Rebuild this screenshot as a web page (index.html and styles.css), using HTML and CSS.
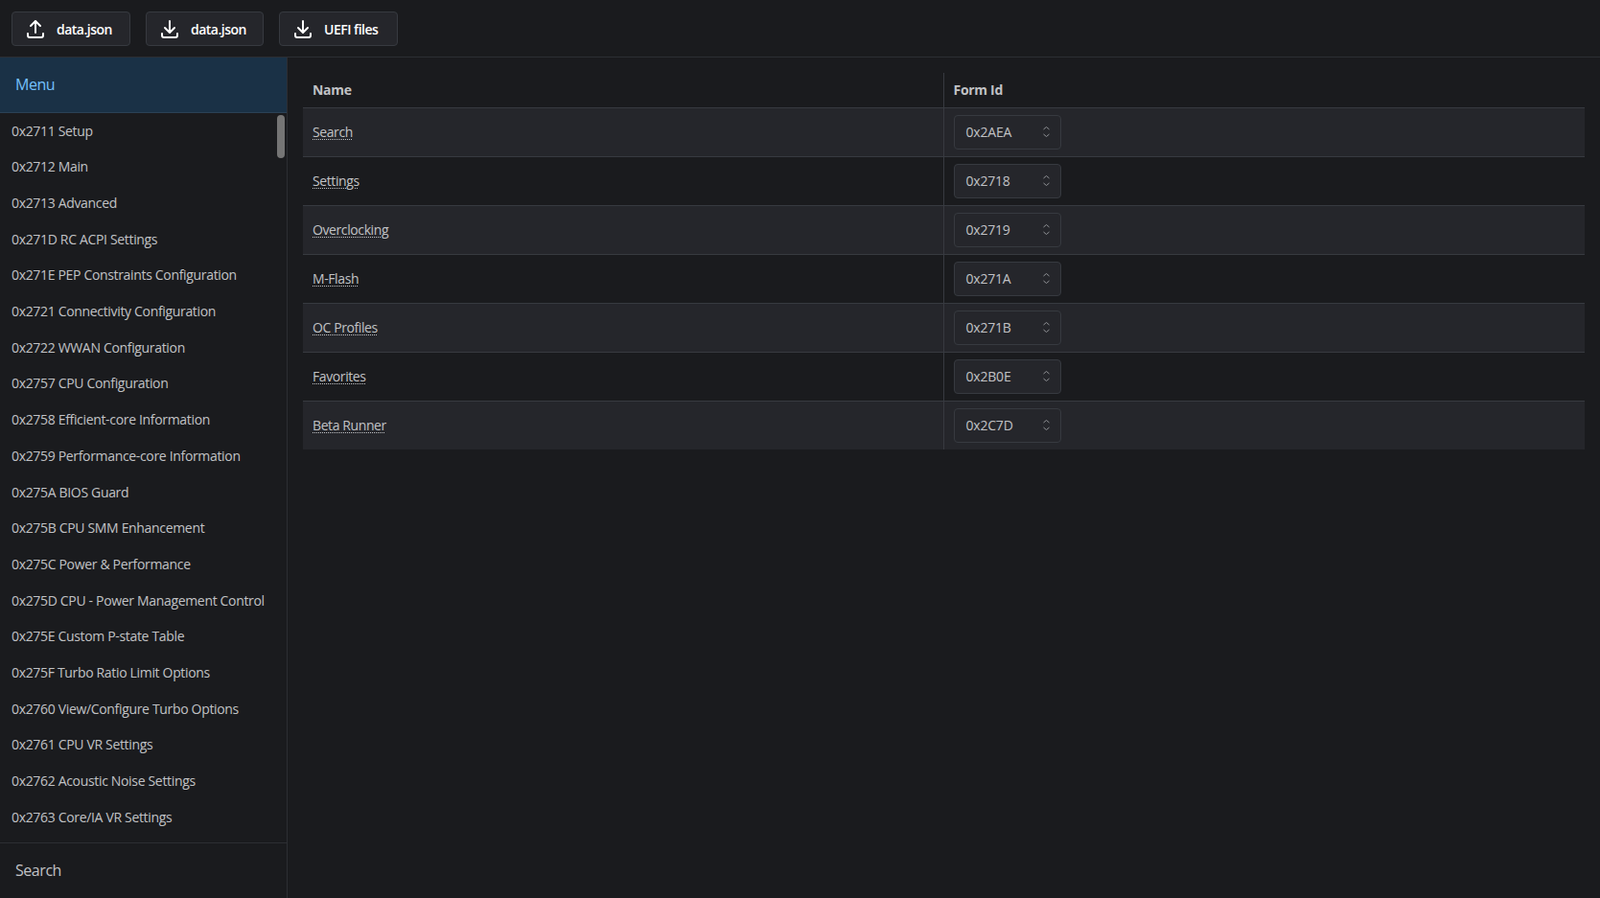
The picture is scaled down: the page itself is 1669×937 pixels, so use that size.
FILE: index.html
```html
<!DOCTYPE html>
<html lang="en">
<head>
<meta charset="utf-8">
<title>Forms</title>
<link rel="stylesheet" href="styles.css">
</head>
<body>
<header class="topbar">
  <button class="tool-btn tool-btn-a"><svg class="tool-icon" viewBox="0 0 24 24"><path d="M4 17v2a2 2 0 0 0 2 2h12a2 2 0 0 0 2-2v-2"/><path d="M7 9l5-5 5 5"/><path d="M12 4v12"/></svg><span>data.json</span></button>
  <button class="tool-btn tool-btn-b"><svg class="tool-icon" viewBox="0 0 24 24"><path d="M4 17v2a2 2 0 0 0 2 2h12a2 2 0 0 0 2-2v-2"/><path d="M7 11l5 5 5-5"/><path d="M12 4v12"/></svg><span>data.json</span></button>
  <button class="tool-btn tool-btn-c"><svg class="tool-icon" viewBox="0 0 24 24"><path d="M4 17v2a2 2 0 0 0 2 2h12a2 2 0 0 0 2-2v-2"/><path d="M7 11l5 5 5-5"/><path d="M12 4v12"/></svg><span>UEFI files</span></button>
</header>
<div class="shell">
  <nav class="sidebar">
    <div class="tab tab-active">Menu</div>
    <div class="list-wrap">
      <ul class="list">
        <li>0x2711 Setup</li>
        <li>0x2712 Main</li>
        <li>0x2713 Advanced</li>
        <li>0x271D RC ACPI Settings</li>
        <li>0x271E PEP Constraints Configuration</li>
        <li>0x2721 Connectivity Configuration</li>
        <li>0x2722 WWAN Configuration</li>
        <li>0x2757 CPU Configuration</li>
        <li>0x2758 Efficient-core Information</li>
        <li>0x2759 Performance-core Information</li>
        <li>0x275A BIOS Guard</li>
        <li>0x275B CPU SMM Enhancement</li>
        <li>0x275C Power &amp; Performance</li>
        <li>0x275D CPU - Power Management Control</li>
        <li>0x275E Custom P-state Table</li>
        <li>0x275F Turbo Ratio Limit Options</li>
        <li>0x2760 View/Configure Turbo Options</li>
        <li>0x2761 CPU VR Settings</li>
        <li>0x2762 Acoustic Noise Settings</li>
        <li>0x2763 Core/IA VR Settings</li>
      </ul>
      <div class="thumb"></div>
    </div>
    <div class="tab tab-search">Search</div>
  </nav>
  <main class="content">
    <table class="forms">
      <thead><tr><th class="col-name">Name</th><th class="col-form">Form Id</th></tr></thead>
      <tbody>
        <tr class="odd"><td><a class="link">Search</a></td><td><div class="select"><span>0x2AEA</span><svg class="chev" viewBox="0 0 15 15"><path d="M4.5 5 7.5 2.5 10.5 5M4.5 10 7.5 12.5 10.5 10"/></svg></div></td></tr>
        <tr><td><a class="link">Settings</a></td><td><div class="select"><span>0x2718</span><svg class="chev" viewBox="0 0 15 15"><path d="M4.5 5 7.5 2.5 10.5 5M4.5 10 7.5 12.5 10.5 10"/></svg></div></td></tr>
        <tr class="odd"><td><a class="link">Overclocking</a></td><td><div class="select"><span>0x2719</span><svg class="chev" viewBox="0 0 15 15"><path d="M4.5 5 7.5 2.5 10.5 5M4.5 10 7.5 12.5 10.5 10"/></svg></div></td></tr>
        <tr><td><a class="link">M-Flash</a></td><td><div class="select"><span>0x271A</span><svg class="chev" viewBox="0 0 15 15"><path d="M4.5 5 7.5 2.5 10.5 5M4.5 10 7.5 12.5 10.5 10"/></svg></div></td></tr>
        <tr class="odd"><td><a class="link">OC Profiles</a></td><td><div class="select"><span>0x271B</span><svg class="chev" viewBox="0 0 15 15"><path d="M4.5 5 7.5 2.5 10.5 5M4.5 10 7.5 12.5 10.5 10"/></svg></div></td></tr>
        <tr><td><a class="link">Favorites</a></td><td><div class="select"><span>0x2B0E</span><svg class="chev" viewBox="0 0 15 15"><path d="M4.5 5 7.5 2.5 10.5 5M4.5 10 7.5 12.5 10.5 10"/></svg></div></td></tr>
        <tr class="odd last"><td><a class="link">Beta Runner</a></td><td><div class="select"><span>0x2C7D</span><svg class="chev" viewBox="0 0 15 15"><path d="M4.5 5 7.5 2.5 10.5 5M4.5 10 7.5 12.5 10.5 10"/></svg></div></td></tr>
      </tbody>
    </table>
  </main>
</div>
</body>
</html>
```
FILE: styles.css
```css
* { box-sizing: border-box; }
html, body { margin: 0; height: 100%; }
body {
  background: #1a1b1e;
  color: #c1c2c5;
  font-family: "Open Sans", "Noto Sans", sans-serif;
  font-size: 14px;
  overflow: hidden;
}
.topbar {
  height: 60px;
  border-bottom: 1px solid #2c2e33;
  padding: 12px 12px 0;
  display: flex;
  align-items: flex-start;
  gap: 16px;
}
.tool-btn {
  height: 36px;
  background: #25262b;
  border: 1px solid #373a40;
  border-radius: 4px;
  color: #fff;
  font: 600 14px "Open Sans", sans-serif;
  letter-spacing: -0.5px;
  white-space: nowrap;
  display: flex;
  align-items: center;
  gap: 10px;
  padding: 0 12px;
}
.tool-btn-a { width: 124px; }
.tool-btn-b { width: 123px; }
.tool-btn-c { width: 124px; }
.tool-icon {
  width: 24px;
  height: 24px;
  fill: none;
  stroke: #fff;
  stroke-width: 2;
  stroke-linecap: round;
  stroke-linejoin: round;
  flex: none;
}
.shell { display: flex; height: 877px; }
.sidebar {
  width: 300px;
  flex: none;
  border-right: 1px solid #2c2e33;
  display: flex;
  flex-direction: column;
}
.tab {
  height: 58px;
  flex: none;
  padding: 0 16px 2px;
  display: flex;
  align-items: center;
  font-size: 16px;
  letter-spacing: -0.45px;
}
.tab-active {
  background: #1a3146;
  color: #74c0fc;
  border-bottom: 1px solid #2b4155;
}
.tab-search {
  height: 58px;
  border-top: 1px solid #2c2e33;
  color: #c1c2c5;
}
.list-wrap { flex: 1; position: relative; overflow: hidden; }
.list { list-style: none; margin: -0.35px 0 0; padding: 0 0 0 12px; }
.list li {
  height: 37.7px;
  line-height: 37px;
  white-space: nowrap;
  letter-spacing: -0.33px;
}
.thumb {
  position: absolute;
  top: 2px;
  right: 2px;
  width: 8px;
  height: 45px;
  border-radius: 4px;
  background: #757575;
}
.content { flex: 1; padding: 16px 16px 0; }
.forms { width: 100%; border-collapse: collapse; table-layout: fixed; }
.forms th {
  height: 36px;
  text-align: left;
  font-weight: 700;
  font-size: 14px;
  padding: 0 10px;
  border-bottom: 1px solid #373a40;
  letter-spacing: -0.3px;
}
.col-name { width: 668px; }
.col-form { border-left: 1px solid #373a40; }
.forms td {
  height: 51px;
  padding: 0 10px;
  border-bottom: 1px solid #373a40;
}
.forms td + td { border-left: 1px solid #373a40; }
.forms tr.last td { border-bottom: 0; }
.forms tr.odd { background: #25262b; }
.link {
  color: #c1c2c5;
  text-decoration: underline dotted 1px;
  text-underline-offset: 2px;
  letter-spacing: -0.4px;
}
.select {
  width: 112px;
  height: 36px;
  border: 1px solid #373a40;
  border-radius: 4px;
  background: #25262b;
  display: flex;
  align-items: center;
  justify-content: space-between;
  padding: 0 7px 0 12px;
  letter-spacing: -0.2px;
}
.chev {
  width: 15px;
  height: 15px;
  fill: none;
  stroke: #909296;
  stroke-width: 1;
}
```
